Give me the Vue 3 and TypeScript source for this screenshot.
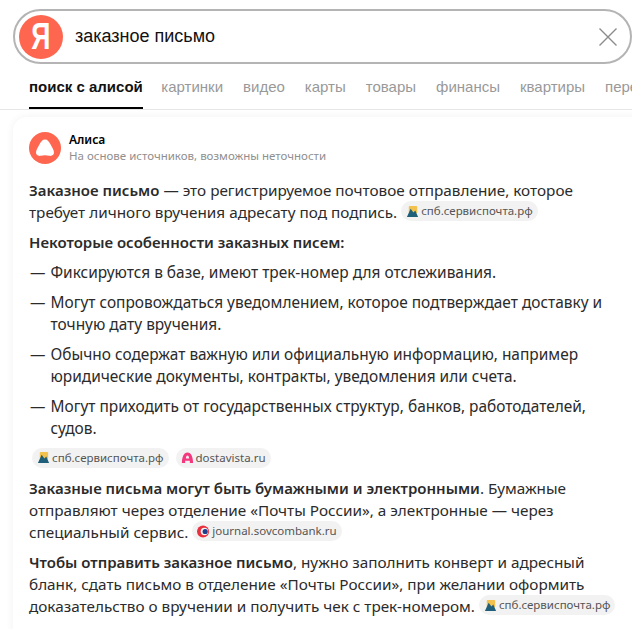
<script setup lang="ts">
const tabs = ['картинки', 'видео', 'карты', 'товары', 'финансы', 'квартиры', 'переводчик'];

const items = [
  'Фиксируются в базе, имеют трек-номер для отслеживания.',
  'Могут сопровождаться уведомлением, которое подтверждает доставку и точную дату вручения.',
  'Обычно содержат важную или официальную информацию, например юридические документы, контракты, уведомления или счета.',
  'Могут приходить от государственных структур, банков, работодателей, судов.',
];
</script>

<template>
  <div class="page">
    <header class="search">
      <div class="logo"><span>Я</span></div>
      <div class="query">заказное письмо</div>
      <svg class="clear" width="18" height="18" viewBox="0 0 18 18">
        <path d="M.5 .5L17.5 17.5M17.5 .5L.5 17.5" stroke="#8c8c8c" stroke-width="1.4" fill="none" />
      </svg>
    </header>

    <nav class="tabs">
      <span class="tab active">поиск с алисой</span>
      <span v-for="tab in tabs" :key="tab" class="tab">{{ tab }}</span>
    </nav>

    <main class="card">
      <div class="head">
        <svg class="alice" width="32" height="32" viewBox="0 0 32 32">
          <circle cx="16" cy="16" r="16" fill="#ff6650" />
          <path d="M16 7.5C13.4 7.5 12 9.6 10.4 12.6C8.8 15.6 7 18.2 7 20.6C7 23.4 9.4 24.2 11.6 23.8C13.2 23.5 14.6 23.2 16 23.2C17.4 23.2 18.8 23.5 20.4 23.8C22.6 24.2 25 23.4 25 20.6C25 18.2 23.2 15.6 21.6 12.6C20 9.6 18.6 7.5 16 7.5Z" fill="#fff" />
        </svg>
        <div>
          <div class="name">Алиса</div>
          <div class="note">На основе источников, возможны неточности</div>
        </div>
      </div>

      <p>
        <b>Заказное письмо</b> — это регистрируемое почтовое отправление, которое требует личного вручения адресату под подпись.
        <span class="chip">
          <svg class="fav" viewBox="0 0 14 14"><rect x="3" y="1" width="9" height="8" rx="1" fill="#f2c14e" /><path d="M1 13L5 4L8 8L10 6L13 13Z" fill="#1f5f7a" /></svg>спб.сервиспочта.рф
        </span>
      </p>
      <p><b>Некоторые особенности заказных писем:</b></p>

      <ul>
        <li v-for="item in items" :key="item">{{ item }}</li>
      </ul>

      <div class="chips">
        <span class="chip">
          <svg class="fav" viewBox="0 0 14 14"><rect x="3" y="1" width="9" height="8" rx="1" fill="#f2c14e" /><path d="M1 13L5 4L8 8L10 6L13 13Z" fill="#1f5f7a" /></svg>спб.сервиспочта.рф
        </span>
        <span class="chip">
          <svg class="fav" viewBox="0 0 14 14"><path fill-rule="evenodd" d="M1 13C1 6.5 3 1.5 7 1.5C11 1.5 13 6.5 13 13H9.5V10.5H4.5V13ZM5.2 8H8.8C8.5 6 8 4.8 7 4.8C6 4.8 5.5 6 5.2 8Z" fill="#f5387e" /></svg>dostavista.ru
        </span>
      </div>

      <p>
        <b>Заказные письма могут быть бумажными и электронными</b>. Бумажные отправляют через отделение «Почты России», а электронные — через специальный сервис.
        <span class="chip">
          <svg class="fav" viewBox="0 0 14 14"><circle cx="6.5" cy="7" r="6.5" fill="#e8303f" /><circle cx="8" cy="7" r="4" fill="#f2f2f2" /><circle cx="8.8" cy="7" r="2.8" fill="#1c3f8f" /></svg>journal.sovcombank.ru
        </span>
      </p>
      <p>
        <b>Чтобы отправить заказное письмо</b>, нужно заполнить конверт и адресный бланк, сдать письмо в отделение «Почты России», при желании оформить доказательство о вручении и получить чек с трек-номером.
        <span class="chip">
          <svg class="fav" viewBox="0 0 14 14"><rect x="3" y="1" width="9" height="8" rx="1" fill="#f2c14e" /><path d="M1 13L5 4L8 8L10 6L13 13Z" fill="#1f5f7a" /></svg>спб.сервиспочта.рф
        </span>
      </p>
    </main>
  </div>
</template>

<style scoped>
.page {
  width: 632px;
  height: 629px;
  overflow: hidden;
  background: #fff;
  font-family: "Noto Sans", sans-serif;
  color: #2b2b2b;
}

.search {
  display: flex;
  align-items: center;
  box-sizing: border-box;
  width: 619px;
  height: 55px;
  margin: 9px 0 0 13px;
  padding: 0 13px 0 4px;
  border: 2px solid #b4b4b4;
  border-radius: 28px;
}

.logo {
  flex: none;
  width: 44px;
  height: 44px;
  border-radius: 50%;
  background: #ff6650;
  color: #fff;
  font: 700 36px/44px "Liberation Sans", sans-serif;
  text-align: center;
}

.logo span {
  display: inline-block;
  transform: scaleX(0.74);
}

.query {
  flex: 1;
  margin-left: 12px;
  font: 18px "Liberation Sans", sans-serif;
  color: #111;
}

.tabs {
  display: flex;
  gap: 20px;
  height: 45px;
  padding-left: 29px;
  border-bottom: 1px solid #e6e6e6;
  white-space: nowrap;
  font: 15px/46px "Liberation Sans", sans-serif;
  color: #999;
}

.tab {
  height: 43px;
}

.active {
  height: 43px;
  margin-right: -1.5px;
  border-bottom: 2px solid #000;
  font-weight: 700;
  color: #111;
}

.card {
  box-sizing: border-box;
  width: 640px;
  height: 540px;
  margin: 7px 0 0 13px;
  padding: 15px 30px 0 16px;
  border-radius: 14px;
  box-shadow: 0 0 8px rgba(0, 0, 0, 0.06);
  font-size: 15.3px;
  line-height: 22px;
}

.head {
  display: flex;
  gap: 8px;
  align-items: center;
  margin-bottom: 14.5px;
}

.alice {
  flex: none;
}

.name {
  font-size: 12px;
  line-height: 16px;
  font-weight: 600;
  color: #000;
}

.note {
  font-size: 11.5px;
  line-height: 16px;
  color: #8f8f8f;
}

p {
  margin: 0 0 8px;
}

b {
  font-size: 15px;
  font-weight: 600;
}

ul {
  margin: 0 0 9px;
  padding: 0;
  list-style: none;
}

li {
  position: relative;
  margin-bottom: 8px;
  padding-left: 21.5px;
  font-size: 15.45px;
}

li::before {
  content: "—";
  position: absolute;
  left: 1px;
}

.chips {
  display: flex;
  gap: 7px;
  margin-bottom: 9px;
  margin-left: 3px;
}

.chip {
  display: inline-flex;
  align-items: center;
  gap: 2px;
  height: 20px;
  padding: 0 5px;
  border-radius: 10px;
  background: #f2f2f2;
  font-size: 11.5px;
  line-height: 20px;
  color: #555;
}

.fav {
  width: 13px;
  height: 13px;
}
</style>
